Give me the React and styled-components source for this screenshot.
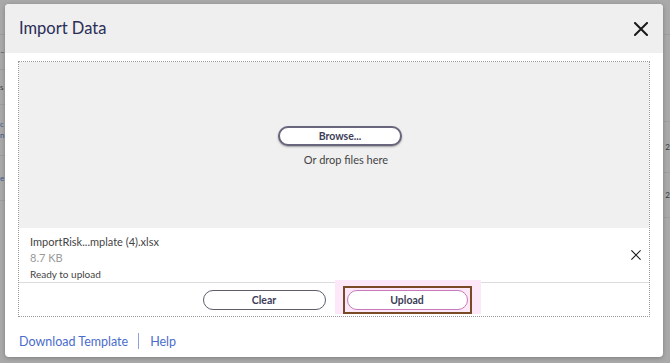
import React from "react";
import styled, { createGlobalStyle } from "styled-components";

const GlobalStyle = createGlobalStyle`
  html, body {
    margin: 0;
    padding: 0;
    background: #a9a9a9;
  }
  body {
    font-family: Lato, "Noto Sans", sans-serif;
  }
`;

const Screen = styled.div`
  position: relative;
  width: 670px;
  height: 363px;
  overflow: hidden;
  background: #a9a9a9;
`;

/* faint page content behind the overlay */
const Page = styled.div`
  display: flex;
  justify-content: space-between;
  height: 100%;
`;

const PageColumn = styled.div`
  display: flex;
  flex-direction: column;
  width: ${({ width }) => width}px;
  padding-top: 34px;
`;

const PageRow = styled.div`
  height: ${({ height }) => height}px;
  border-top: 1px solid #9d9d9d;
  display: flex;
  flex-direction: column;
  justify-content: center;
  align-items: ${({ right }) => (right ? "flex-end" : "flex-start")};
  font-size: 8px;
  color: ${({ link }) => (link ? "#3c5a8e" : "#3a3a3a")};
  line-height: 11px;
`;

const Modal = styled.div`
  position: absolute;
  top: 4px;
  left: 5px;
  width: 658px;
  height: 353px;
  background: #fff;
  border-radius: 4px;
  box-shadow: 0 1px 4px rgba(0, 0, 0, 0.25);
  overflow: hidden;
  display: flex;
  flex-direction: column;
`;

const Header = styled.div`
  height: 49px;
  flex: none;
  background: #efefef;
  display: flex;
  align-items: center;
  justify-content: space-between;
  padding: 0 15px 0 14px;
`;

const Title = styled.h1`
  margin: 0 0 2px 0;
  font-size: 16.5px;
  font-weight: 400;
  color: #2b2d58;
`;

const IconButton = styled.button`
  border: none;
  background: none;
  padding: 0;
  display: flex;
  align-items: center;
  justify-content: center;
  cursor: pointer;
  color: #1a1a1a;
`;

const Body = styled.div`
  padding: 8px 13px 0 13px;
  display: flex;
  flex-direction: column;
`;

const DropZone = styled.div`
  border: 1px dotted #9a9a9a;
  height: 256px;
  box-sizing: border-box;
  display: flex;
  flex-direction: column;
`;

const DropArea = styled.div`
  height: 166px;
  background: #f0f0f0;
  display: flex;
  flex-direction: column;
  align-items: center;
  justify-content: center;
  padding: 2px 0 0 12px;
  box-sizing: border-box;
  gap: 7px;
`;

const Pill = styled.button`
  width: ${({ width }) => width}px;
  height: 20px;
  border-radius: 10px;
  background: #fff;
  border: ${({ variant }) =>
    variant === "upload"
      ? "1px solid #c77ab9"
      : variant === "browse"
      ? "2px solid #68667c"
      : "1.5px solid #5d5d6c"};
  box-shadow: ${({ variant }) =>
    variant === "browse" ? "0 1px 2px rgba(0,0,0,0.35)" : "none"};
  font-family: Lato, "Noto Sans", sans-serif;
  font-size: 10.5px;
  font-weight: 700;
  color: #3d3d58;
  padding: 0;
  display: flex;
  align-items: center;
  justify-content: center;
  cursor: pointer;
`;

const DropText = styled.div`
  font-size: 11px;
  color: #444;
  margin-left: 12px;
`;

const FileRow = styled.div`
  height: 55px;
  box-sizing: border-box;
  border-bottom: 1px solid #dcdcdc;
  display: flex;
  align-items: center;
  justify-content: space-between;
  padding: 0 8px 0 11px;
`;

const FileInfo = styled.div`
  display: flex;
  flex-direction: column;
  padding-top: 6px;
`;

const FileLine = styled.div`
  font-size: ${({ small }) => (small ? 10 : 11)}px;
  line-height: 16px;
  color: ${({ muted }) => (muted ? "#9a9a9a" : "#444")};
`;

const Actions = styled.div`
  flex: 1;
  display: flex;
  align-items: center;
  justify-content: center;
  gap: 21px;
  padding-left: 2px;
`;

const Highlight = styled.div`
  position: relative;
  padding: 2px;
  border: 2px solid #7a4a26;

  &::before {
    content: "";
    position: absolute;
    top: -8px;
    left: -10px;
    right: -11px;
    bottom: -2px;
    background: #fde8fa;
    z-index: -1;
  }
`;

const HighlightWrap = styled.div`
  position: relative;
  z-index: 0;
  margin: 0 -4px;
`;

const Footer = styled.div`
  display: flex;
  align-items: center;
  padding: 16px 0 0 1px;
  font-size: 12.5px;
`;

const Link = styled.a`
  color: #4a6ccc;
  text-decoration: none;
  cursor: pointer;
`;

const Divider = styled.span`
  width: 1px;
  height: 16px;
  background: #8ea2d8;
  margin: 0 11px 0 10px;
`;

const CloseIcon = ({ size, stroke }) => (
  <svg width={size} height={size} viewBox="0 0 14 14" fill="none">
    <path
      d="M1 1 L13 13 M13 1 L1 13"
      stroke="currentColor"
      strokeWidth={stroke}
      strokeLinecap="square"
    />
  </svg>
);

export default function App() {
  return (
    <>
      <GlobalStyle />
      <Screen>
        <Page>
          <PageColumn width={5}>
            <PageRow height={34}>–</PageRow>
            <PageRow height={34}>s</PageRow>
            <PageRow height={50} link>
              <span>c</span>
              <span>n</span>
            </PageRow>
            <PageRow height={44} link>
              e
            </PageRow>
            <PageRow height={40} />
          </PageColumn>
          <PageColumn width={6}>
            <PageRow height={86} />
            <PageRow height={50} right>
              2
            </PageRow>
            <PageRow height={44} right>
              2
            </PageRow>
            <PageRow height={40} />
          </PageColumn>
        </Page>

        <Modal>
          <Header>
            <Title>Import Data</Title>
            <IconButton>
              <CloseIcon size={14} stroke={2} />
            </IconButton>
          </Header>
          <Body>
            <DropZone>
              <DropArea>
                <Pill variant="browse" width={124}>
                  Browse...
                </Pill>
                <DropText>Or drop files here</DropText>
              </DropArea>
              <FileRow>
                <FileInfo>
                  <FileLine>ImportRisk...mplate (4).xlsx</FileLine>
                  <FileLine muted>8.7 KB</FileLine>
                  <FileLine small>Ready to upload</FileLine>
                </FileInfo>
                <IconButton>
                  <CloseIcon size={10} stroke={1.5} />
                </IconButton>
              </FileRow>
              <Actions>
                <Pill width={123}>Clear</Pill>
                <HighlightWrap>
                  <Highlight>
                    <Pill variant="upload" width={121}>
                      Upload
                    </Pill>
                  </Highlight>
                </HighlightWrap>
              </Actions>
            </DropZone>
            <Footer>
              <Link>Download Template</Link>
              <Divider />
              <Link>Help</Link>
            </Footer>
          </Body>
        </Modal>
      </Screen>
    </>
  );
}
